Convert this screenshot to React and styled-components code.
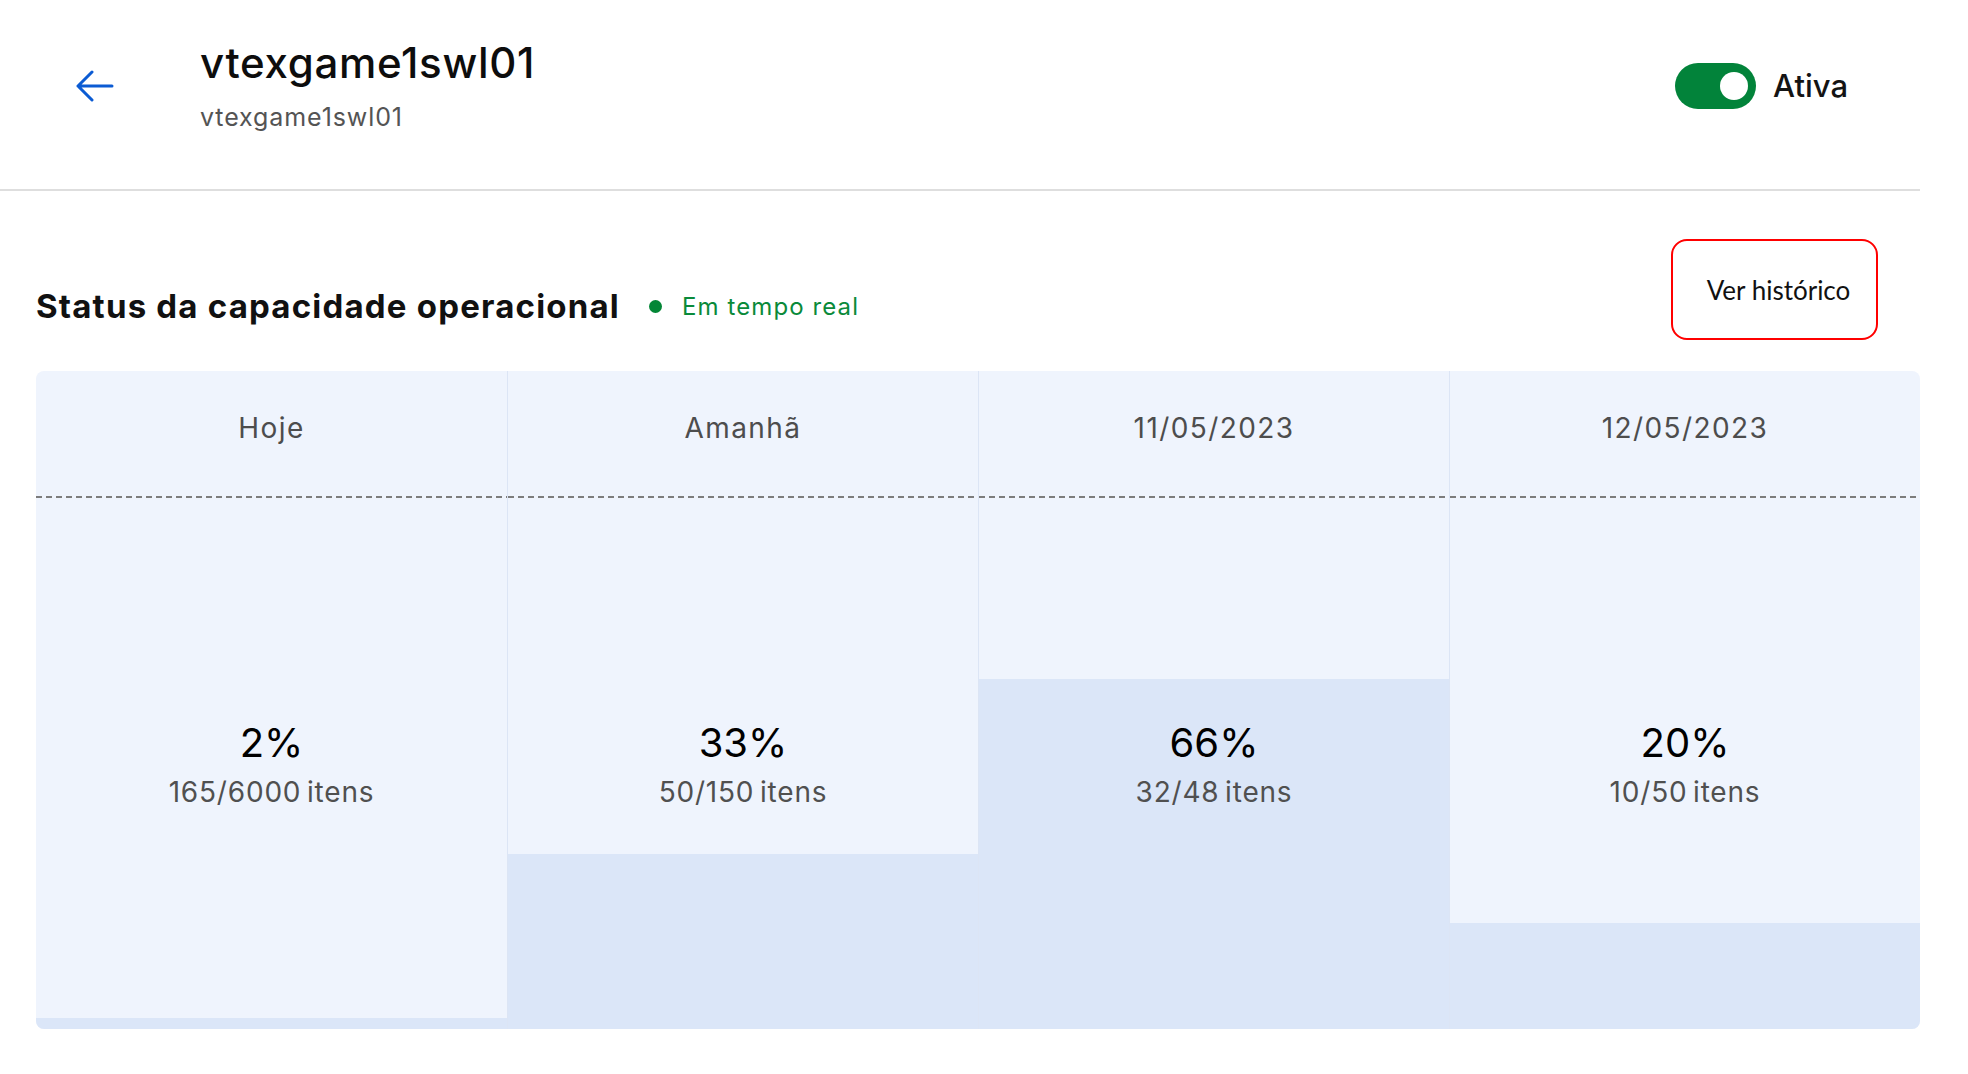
import React from 'react'
import styled, { createGlobalStyle } from 'styled-components'

const GlobalStyle = createGlobalStyle`
    body {
        margin: 0;
        background: #fff;
        font-family: Inter, "Noto Sans", sans-serif;
        color: #111;
    }
`

const Page = styled.div`
    width: 1920px;
`

const Header = styled.header`
    display: flex;
    align-items: center;
    height: 171px;
    padding: 0 72px 18px 74px;
    border-bottom: 2px solid #dedede;
`

const BackButton = styled.button`
    display: flex;
    align-items: center;
    justify-content: center;
    width: 40px;
    height: 32px;
    padding: 0;
    border: none;
    background: none;
    cursor: pointer;
`

const TitleBlock = styled.div`
    display: flex;
    flex-direction: column;
    margin-left: 86px;
`

const StoreName = styled.h1`
    margin: 0;
    font-size: 42px;
    line-height: 50px;
    font-weight: 500;
    letter-spacing: 0.7px;
    color: #0d0d0d;
`

const StoreId = styled.div`
    margin-top: 13px;
    font-size: 25px;
    line-height: 32px;
    letter-spacing: 0.9px;
    color: #545454;
`

const Status = styled.label`
    display: flex;
    align-items: center;
    gap: 17px;
    margin-left: auto;
    font-size: 31px;
    font-weight: 500;
    color: #141414;
`

const Switch = styled.span`
    position: relative;
    display: block;
    width: 81px;
    height: 46px;
    border-radius: 23px;
    background: ${p => (p.$on ? '#02833a' : '#c4c4c4')};

    &::after {
        content: '';
        position: absolute;
        top: 9px;
        ${p => (p.$on ? 'right: 8px;' : 'left: 8px;')}
        width: 28px;
        height: 28px;
        border-radius: 50%;
        background: #fff;
    }
`

const Section = styled.section`
    padding: 48px 0 0 36px;
`

const SectionHead = styled.div`
    display: flex;
    justify-content: space-between;
    align-items: flex-end;
    padding-right: 42px;
`

const HeadLeft = styled.div`
    display: flex;
    align-items: center;
    margin-bottom: 14px;
`

const SectionTitle = styled.h2`
    margin: 0;
    font-size: 33px;
    line-height: 39px;
    font-weight: 700;
    letter-spacing: 1.2px;
    color: #111;
`

const Live = styled.span`
    display: flex;
    align-items: center;
    gap: 20px;
    margin-left: 29px;
    font-size: 24px;
    letter-spacing: 1.1px;
    color: #0a8a3a;

    &::before {
        content: '';
        width: 13px;
        height: 13px;
        border-radius: 50%;
        background: #038636;
    }
`

const HistoryButton = styled.button`
    width: 207px;
    height: 101px;
    padding: 0 0 0 8px;
    border: 2px solid #ff0000;
    border-radius: 16px;
    background: #fff;
    font-family: Lato, "Open Sans", sans-serif;
    font-size: 26px;
    color: #111;
    cursor: pointer;
`

const Table = styled.div`
    display: grid;
    grid-template-columns: repeat(4, 1fr);
    width: 1884px;
    margin-top: 31px;
    border-radius: 8px;
    overflow: hidden;
    background: #eff4fd;
`

const Column = styled.div`
    display: flex;
    flex-direction: column;
    border-left: ${p => (p.$first ? 'none' : '1px solid #dce5f5')};
`

const HeadCell = styled.div`
    height: 87px;
    padding-top: 40px;
    text-align: center;
    font-size: 28px;
    line-height: 34px;
    letter-spacing: 1.4px;
    color: #4d4d4d;
    background: linear-gradient(to right, #7c7c7c 60%, transparent 0) left bottom / 10px 2px repeat-x;
`

const BodyCell = styled.div`
    display: flex;
    flex-direction: column;
    align-items: center;
    justify-content: center;
    height: 531px;
    background: linear-gradient(to top, #dbe6f8 ${p => p.$pct}%, #eff4fd ${p => p.$pct}%);
`

const Percent = styled.div`
    font-size: 40px;
    line-height: 48px;
    color: #000;
`

const Items = styled.div`
    margin-top: 8px;
    font-size: 28px;
    line-height: 34px;
    letter-spacing: 0.8px;
    word-spacing: -3px;
    color: #505050;
`

const days = [
    { label: 'Hoje', pct: 2, used: 165, total: 6000 },
    { label: 'Amanhã', pct: 33, used: 50, total: 150 },
    { label: '11/05/2023', pct: 66, used: 32, total: 48 },
    { label: '12/05/2023', pct: 20, used: 10, total: 50 },
]

const ArrowLeft = () => (
    <svg width="40" height="32" viewBox="0 0 40 32" fill="none">
        <path d="M18 2 L4 16 L18 30 M4 16 H38" stroke="#0b5bd3" strokeWidth="3" strokeLinecap="round" strokeLinejoin="round" />
    </svg>
)

export default function App() {
    return (
        <Page>
            <GlobalStyle />
            <Header>
                <BackButton aria-label="Voltar">
                    <ArrowLeft />
                </BackButton>
                <TitleBlock>
                    <StoreName>vtexgame1swl01</StoreName>
                    <StoreId>vtexgame1swl01</StoreId>
                </TitleBlock>
                <Status>
                    <Switch $on />
                    Ativa
                </Status>
            </Header>
            <Section>
                <SectionHead>
                    <HeadLeft>
                        <SectionTitle>Status da capacidade operacional</SectionTitle>
                        <Live>Em tempo real</Live>
                    </HeadLeft>
                    <HistoryButton>Ver histórico</HistoryButton>
                </SectionHead>
                <Table>
                    {days.map((d, i) => (
                        <Column key={d.label} $first={i === 0}>
                            <HeadCell>{d.label}</HeadCell>
                            <BodyCell $pct={d.pct}>
                                <Percent>{d.pct}%</Percent>
                                <Items>{d.used}/{d.total} itens</Items>
                            </BodyCell>
                        </Column>
                    ))}
                </Table>
            </Section>
        </Page>
    )
}
